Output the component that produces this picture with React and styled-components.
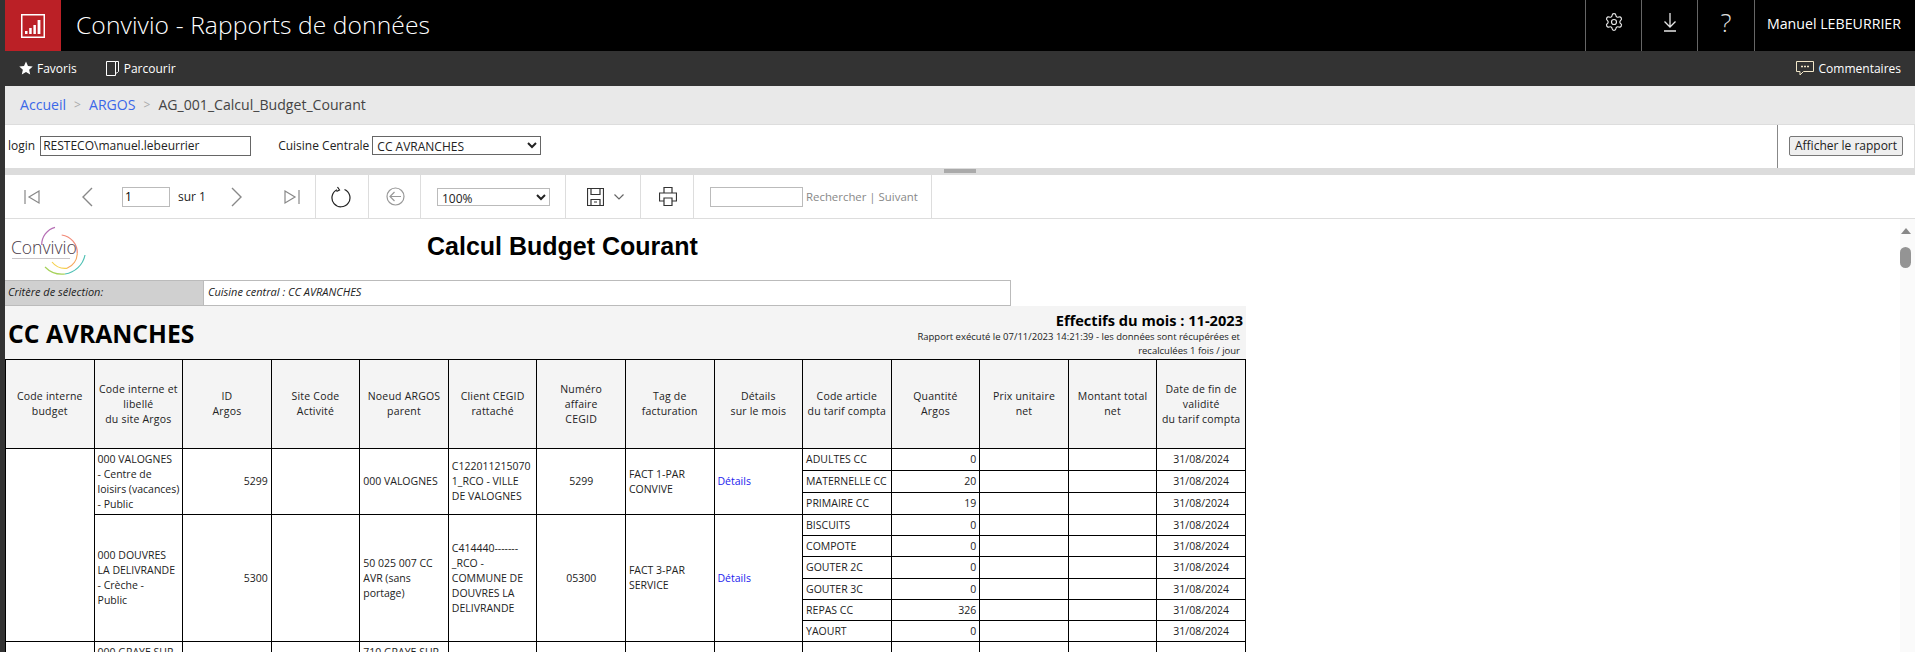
import React from 'react';
import styled, { createGlobalStyle } from 'styled-components';
import { Settings } from 'lucide-react';

const GlobalStyle = createGlobalStyle`
  html, body {
    margin: 0;
    height: 100%;
    overflow: hidden;
    background: #333;
    font-family: 'Open Sans', 'Liberation Sans', sans-serif;
  }
  #root { height: 100%; }
  * { box-sizing: border-box; }
`;

const Page = styled.div`
  height: 652px;
  padding-left: 5px;
  display: flex;
  flex-direction: column;
  overflow: hidden;
`;

// top black bar
const Header = styled.header`
  height: 51px;
  flex: none;
  background: #000;
  color: #fff;
  display: flex;
  align-items: stretch;
`;

const AppTile = styled.div`
  width: 56px;
  background: #bb2026;
  display: flex;
  align-items: center;
  justify-content: center;
`;

const AppTitle = styled.h1`
  margin: 0 auto 0 15px;
  font-size: 24.6px;
  font-weight: 300;
  line-height: 49px;
  letter-spacing: 0.1px;
  white-space: nowrap;
`;

const HeaderBtn = styled.div`
  width: ${(p) => p.$w || 56}px;
  border-left: 1px solid #666;
  display: flex;
  align-items: center;
  justify-content: center;
  padding-bottom: 7px;
  font-size: 26px;
  font-weight: 300;
  color: #ddd;
`;

const UserName = styled.div`
  width: 161px;
  border-left: 1px solid #666;
  padding: 0 14px 4px 0;
  font-size: 14.2px;
  display: flex;
  align-items: center;
  justify-content: flex-end;
  white-space: nowrap;
`;

// dark nav
const NavBar = styled.nav`
  height: 35px;
  flex: none;
  background: #333;
  color: #fff;
  display: flex;
  align-items: center;
  font-size: 12px;
  padding: 0 14px 1px 14px;
`;

const NavItem = styled.span`
  display: flex;
  align-items: center;
  gap: ${(p) => p.$gap || 5}px;
  margin-right: ${(p) => p.$mr || 0}px;
  margin-left: ${(p) => (p.$right ? 'auto' : 0)};
`;

const Breadcrumb = styled.div`
  height: 39px;
  flex: none;
  background: #e9e9e9;
  border-bottom: 1px solid #ddd;
  display: flex;
  align-items: center;
  padding: 0 0 1px 15px;
  font-size: 14.1px;
  color: #444;
`;

const Crumb = styled.a`
  color: #3b68e8;
`;

const CrumbSep = styled.span`
  color: #aaa;
  margin: 0 8px;
  font-size: 12px;
`;

const ParamBar = styled.div`
  height: 43px;
  flex: none;
  background: #fff;
  display: flex;
  align-items: stretch;
  font-size: 12px;
  color: #222;
`;

const ParamFields = styled.div`
  flex: 1;
  display: flex;
  align-items: center;
  padding: 0 0 2px 3px;
`;

const ParamLabel = styled.label`
  margin-left: ${(p) => p.$ml || 0}px;
  margin-right: ${(p) => p.$mr || 3}px;
`;

const LoginInput = styled.input`
  width: 211px;
  height: 20px;
  border: 1px solid #666;
  padding: 0 2px;
  font: 12px 'Open Sans', sans-serif;
  color: #222;
`;

const BoxSelect = styled.select`
  width: ${(p) => p.$w}px;
  height: ${(p) => p.$h}px;
  border: 1px solid ${(p) => p.$line};
  border-radius: 0;
  background: #fff;
  font: 12px 'Open Sans', sans-serif;
  color: #222;
  padding: 0;
`;

const ViewCell = styled.div`
  width: 138px;
  border-left: 1px solid #888;
  border-right: 1px solid #ddd;
  display: flex;
  align-items: center;
  padding: 0 0 2px 11px;
`;

const ViewBtn = styled.button`
  width: 114px;
  height: 20px;
  border: 1px solid #777;
  border-radius: 2px;
  background: #efefef;
  font: 12px 'Open Sans', sans-serif;
  color: #222;
  padding: 0;
  white-space: nowrap;
`;

const Splitter = styled.div`
  height: 7px;
  flex: none;
  background: #dcdcdc;
  padding: 1px 0 0 939px;
`;

const SplitHandle = styled.div`
  width: 32px;
  height: 4px;
  background: #aaa;
`;

// report toolbar
const ToolBar = styled.div`
  height: 44px;
  flex: none;
  background: #fff;
  border-bottom: 1px solid #ddd;
  display: flex;
`;

const ToolGroup = styled.div`
  width: ${(p) => p.$w}px;
  flex: none;
  border-right: 1px solid #ddd;
  display: flex;
  align-items: center;
  padding-left: ${(p) => p.$pl || 0}px;
`;

const ToolIcon = styled.svg`
  flex: none;
  margin-left: ${(p) => p.$ml || 0}px;
  fill: none;
  stroke: ${(p) => p.$c || '#888'};
  stroke-width: 1.2;
`;

const PageInput = styled.input`
  width: 48px;
  height: 20px;
  border: 1px solid #bbb;
  padding: 0 2px;
  margin-left: 29px;
  font: 12px 'Open Sans', sans-serif;
`;

const PageOf = styled.span`
  font-size: 12px;
  color: #222;
  margin-left: 8px;
`;

const SearchInput = styled.input`
  width: 93px;
  height: 20px;
  border: 1px solid #bbb;
  padding: 0;
`;

const SearchText = styled.span`
  font-size: 11.4px;
  color: #888;
  margin-left: 3px;
  white-space: nowrap;
`;

const ReportArea = styled.div`
  flex: 1;
  min-height: 0;
  background: #fff;
  display: flex;
`;

const ReportBody = styled.div`
  flex: 1;
  min-width: 0;
  overflow: hidden;
`;

const Scrollbar = styled.div`
  width: 15px;
  flex: none;
  background: #fafafa;
  padding: 9px 4px 0 0;
  display: flex;
  flex-direction: column;
  align-items: center;
`;

const ScrollArrow = styled.div`
  width: 0;
  height: 0;
  border-left: 5px solid transparent;
  border-right: 5px solid transparent;
  border-bottom: 6px solid #888;
`;

const ScrollThumb = styled.div`
  width: 11px;
  height: 21px;
  margin-top: 13px;
  border-radius: 6px;
  background: #949494;
`;

const TitleRow = styled.div`
  height: 61px;
  display: flex;
  align-items: center;
`;

const ReportTitle = styled.h2`
  margin: 0 0 6px 337px;
  font: bold 25px 'Liberation Sans', Arial, sans-serif;
  color: #000;
  white-space: nowrap;
`;

const Criteria = styled.div`
  height: 26px;
  width: 1006px;
  display: flex;
  font-size: 11px;
  font-style: italic;
  color: #222;
`;

const CriteriaLabel = styled.div`
  width: 199px;
  background: #d0d0d0;
  border-top: 1px solid #bbb;
  border-bottom: 1px solid #bbb;
  border-right: 1px solid #bbb;
  padding-left: 3px;
  line-height: 22px;
`;

const CriteriaValue = styled.div`
  flex: 1;
  border: 1px solid #bbb;
  border-left: none;
  padding-left: 4px;
  line-height: 22px;
`;

const Panel = styled.div`
  width: 1241px;
  background: #f4f4f4;
`;

const PanelHead = styled.div`
  height: 53px;
  display: flex;
  justify-content: space-between;
  padding: 0 3px 0 3px;
`;

const CenterName = styled.div`
  font-size: 24.7px;
  font-weight: 700;
  color: #000;
  line-height: 55px;
  white-space: nowrap;
`;

const PanelInfo = styled.div`
  text-align: right;
  padding-top: 5px;
`;

const MonthLabel = styled.div`
  font-size: 14.6px;
  font-weight: 700;
  color: #000;
  line-height: 19px;
`;

const RunNote = styled.div`
  font-size: 9.5px;
  line-height: 14px;
  color: #222;
  padding-right: 3px;
  white-space: pre;
`;

const Grid = styled.table`
  width: 1241px;
  table-layout: fixed;
  border-collapse: collapse;
  border: 1px solid #000;
  font-size: 10.5px;
  line-height: 15px;
  color: #222;
  background: #fff;
`;

const Head = styled.th`
  height: 89px;
  background: #f4f4f4;
  border: 1px solid #000;
  font-weight: 400;
  text-align: center;
  letter-spacing: 0.2px;
  padding: 0 1px;
  white-space: pre;
`;

const Cell = styled.td`
  border: 1px solid #000;
  padding: ${(p) => (p.$top ? '3px' : '0')} 3px 0;
  height: ${(p) => (p.$h ? p.$h + 'px' : 'auto')};
  text-align: ${(p) => p.$align || 'left'};
  vertical-align: ${(p) => (p.$top ? 'top' : 'middle')};
  white-space: pre;
  overflow: hidden;
`;

const DetailLink = styled.a`
  color: #2222ee;
`;

const headers = [
  'Code interne\nbudget',
  'Code interne et\nlibellé\ndu site Argos',
  'ID\nArgos',
  'Site Code\nActivité',
  'Noeud ARGOS\nparent',
  'Client CEGID\nrattaché',
  'Numéro\naffaire\nCEGID',
  'Tag de\nfacturation',
  'Détails\nsur le mois',
  'Code article\ndu tarif compta',
  'Quantité\nArgos',
  'Prix unitaire\nnet',
  'Montant total\nnet',
  'Date de fin de\nvalidité\ndu tarif compta',
];

const sites = [
  {
    label: '000 VALOGNES\n- Centre de\nloisirs (vacances)\n- Public',
    id: '5299',
    parent: '000 VALOGNES',
    client: 'C122011215070\n1_RCO - VILLE\nDE VALOGNES',
    affaire: '5299',
    tag: 'FACT 1-PAR\nCONVIVE',
    lines: [['ADULTES CC', '0', 22], ['MATERNELLE CC', '20', 22], ['PRIMAIRE CC', '19', 22]],
  },
  {
    label: '000 DOUVRES\nLA DELIVRANDE\n- Crèche -\nPublic',
    id: '5300',
    parent: '50 025 007 CC\nAVR (sans\nportage)',
    client: 'C414440-------\n_RCO -\nCOMMUNE DE\nDOUVRES LA\nDELIVRANDE',
    affaire: '05300',
    tag: 'FACT 3-PAR\nSERVICE',
    lines: [['BISCUITS', '0', 21], ['COMPOTE', '0', 21], ['GOUTER 2C', '0', 22], ['GOUTER 3C', '0', 21], ['REPAS CC', '326', 21], ['YAOURT', '0', 21]],
  },
];

const Logo = () => (
  <svg width="85" height="52" viewBox="0 0 85 52" fill="none" strokeWidth="1.2">
    <path d="M36.700 21A18 18 0 0 1 50 3.300" stroke="#b66fb5" />
    <path d="M56.700 11A18 18 0 0 1 72.300 29.300" stroke="#f28a78" />
    <path d="M72.300 29.300A17 17 0 0 1 62 44.300" stroke="#f6a860" />
    <path d="M62 44.300A17 17 0 0 1 47 38" stroke="#f5d04c" />
    <path d="M80 31A24 24 0 0 1 60 50" stroke="#4fc0b4" />
    <path d="M60 50A24 24 0 0 1 40 43" stroke="#a6d25a" />
    <text x="6" y="30" fontFamily="'Open Sans', sans-serif" fontSize="17.500" fontWeight="300" fill="#4a3b48">Convivio</text>
    <path d="M7 34.500h58" stroke="#c9c5c8" />
  </svg>
);

export default function App() {
  return (
    <Page>
      <GlobalStyle />
      <Header>
        <AppTile>
          <svg width="24" height="24" viewBox="0 0 24 24" fill="none">
            <rect x="0.75" y="0.75" width="22.5" height="22.5" stroke="#fff" strokeWidth="1.5" />
            <path d="M4 20v-3h2.500v3zM8.200 20v-6h2.500v6zM12.400 20v-9h2.500v9zM16.600 20V6h2.800v14z" fill="#fff" />
          </svg>
        </AppTile>
        <AppTitle>Convivio - Rapports de données</AppTitle>
        <HeaderBtn>
          <Settings size={20} strokeWidth={1.4} color="#e6e6e6" />
        </HeaderBtn>
        <HeaderBtn>
          <svg width="14" height="20" viewBox="0 0 14 20" fill="none" stroke="#e6e6e6" strokeWidth="1.3">
            <path d="M7 1v14M1.500 9.500 7 15l5.500-5.500M1 19h12" />
          </svg>
        </HeaderBtn>
        <HeaderBtn $w={57}>?</HeaderBtn>
        <UserName>Manuel LEBEURRIER</UserName>
      </Header>

      <NavBar>
        <NavItem $mr={29} $gap={4}>
          <svg width="14" height="14" viewBox="0 0 24 24" fill="#fff">
            <path d="M12 1l3.400 7.600 8.100.8-6.100 5.500 1.800 8.100L12 18.800 4.800 23l1.800-8.100L.5 9.400l8.100-.8z" />
          </svg>
          Favoris
        </NavItem>
        <NavItem>
          <svg width="13" height="15" viewBox="0 0 13 15" fill="none" stroke="#fff">
            <path d="M.5.500h9v14h-9zM9.500.5h3v10l-1 1-2 1" />
          </svg>
          Parcourir
        </NavItem>
        <NavItem $right $gap={5}>
          <svg width="18" height="15" viewBox="0 0 18 15" fill="none" stroke="#f1e6c8">
            <path d="M.5.500h17v10H7.500L4 14v-3.500H.5z" />
            <path d="M5 5.500h2M8 5.500h2M11 5.500h2" strokeWidth="1.600" />
          </svg>
          Commentaires
        </NavItem>
      </NavBar>

      <Breadcrumb>
        <Crumb>Accueil</Crumb>
        <CrumbSep>&gt;</CrumbSep>
        <Crumb>ARGOS</Crumb>
        <CrumbSep>&gt;</CrumbSep>
        <span>AG_001_Calcul_Budget_Courant</span>
      </Breadcrumb>

      <ParamBar>
        <ParamFields>
          <ParamLabel $mr={5}>login</ParamLabel>
          <LoginInput readOnly value="RESTECO\manuel.lebeurrier" />
          <ParamLabel $ml={27}>Cuisine Centrale</ParamLabel>
          <BoxSelect $w={169} $h={19} $line="#666" defaultValue="CC AVRANCHES">
            <option>CC AVRANCHES</option>
          </BoxSelect>
        </ParamFields>
        <ViewCell>
          <ViewBtn>Afficher le rapport</ViewBtn>
        </ViewCell>
      </ParamBar>

      <Splitter>
        <SplitHandle />
      </Splitter>

      <ToolBar>
        <ToolGroup $w={311} $pl={19}>
          <ToolIcon width="16" height="16" viewBox="0 0 16 16">
            <path d="M1 1v14M15 2 5 8l10 6z" />
          </ToolIcon>
          <ToolIcon $ml={41} width="12" height="20" viewBox="0 0 12 20" style={{ strokeWidth: 1.4 }}>
            <path d="M11 1 2 10l9 9" />
          </ToolIcon>
          <PageInput readOnly value="1" />
          <PageOf>sur 1</PageOf>
          <ToolIcon $ml={25} width="12" height="20" viewBox="0 0 12 20" style={{ strokeWidth: 1.4 }}>
            <path d="m1 1 9 9-9 9" />
          </ToolIcon>
          <ToolIcon $ml={41} width="16" height="16" viewBox="0 0 16 16">
            <path d="M15 1v14M1 2l10 6-10 6z" />
          </ToolIcon>
        </ToolGroup>
        <ToolGroup $w={53} $pl={15}>
          <ToolIcon width="20" height="22" viewBox="0 0 20 22" $c="#222">
            <path d="M13.500 3.500A9 9 0 1 1 6 3.700M6.500 1l2 3-3 1.500" />
          </ToolIcon>
        </ToolGroup>
        <ToolGroup $w={52} $pl={17}>
          <ToolIcon width="19" height="19" viewBox="0 0 19 19" $c="#999">
            <circle cx="9.500" cy="9.500" r="8.500" />
            <path d="M15 9.500H4M8.500 5l-4.500 4.500L8.500 14" />
          </ToolIcon>
        </ToolGroup>
        <ToolGroup $w={145} $pl={16}>
          <BoxSelect $w={113} $h={18} $line="#bbb" defaultValue="100%">
            <option>100%</option>
          </BoxSelect>
        </ToolGroup>
        <ToolGroup $w={75} $pl={21}>
          <ToolIcon width="17" height="18" viewBox="0 0 17 18" $c="#333">
            <path d="M.5.500h16v17H.5zM4 .5v6h9v-6M4 17.500v-6h9v6M7 14h3" />
          </ToolIcon>
          <ToolIcon $ml={10} width="10" height="6" viewBox="0 0 10 6" $c="#666">
            <path d="m.5.500 4.500 4.500L9.500.5" />
          </ToolIcon>
        </ToolGroup>
        <ToolGroup $w={53} $pl={18}>
          <ToolIcon width="18" height="19" viewBox="0 0 18 19" $c="#333">
            <path d="M5 6V.5h8V6M5 14H.5V6h17v8H13M5 11h8v7.500H5z" />
          </ToolIcon>
        </ToolGroup>
        <ToolGroup $w={238} $pl={16}>
          <SearchInput readOnly />
          <SearchText>Rechercher | Suivant</SearchText>
        </ToolGroup>
      </ToolBar>

      <ReportArea>
        <ReportBody>
          <TitleRow>
            <Logo />
            <ReportTitle>Calcul Budget Courant</ReportTitle>
          </TitleRow>
          <Criteria>
            <CriteriaLabel>Critère de sélection:</CriteriaLabel>
            <CriteriaValue>Cuisine central : CC AVRANCHES</CriteriaValue>
          </Criteria>
          <Panel>
            <PanelHead>
              <CenterName>CC AVRANCHES</CenterName>
              <PanelInfo>
                <MonthLabel>Effectifs du mois : 11-2023</MonthLabel>
                <RunNote>
                  {'Rapport exécuté le 07/11/2023 14:21:39 - les données sont récupérées et\nrecalculées 1 fois / jour'}
                </RunNote>
              </PanelInfo>
            </PanelHead>
            <Grid>
              <thead>
                <tr>
                  {headers.map((h) => (
                    <Head key={h}>{h}</Head>
                  ))}
                </tr>
              </thead>
              <tbody>
                {sites.map((s, si) =>
                  s.lines.map((line, i) => (
                    <tr key={line[0]}>
                      {i === 0 && si === 0 && <Cell rowSpan={9} />}
                      {i === 0 && (
                        <>
                          <Cell rowSpan={s.lines.length}>{s.label}</Cell>
                          <Cell rowSpan={s.lines.length} $align="right">{s.id}</Cell>
                          <Cell rowSpan={s.lines.length} />
                          <Cell rowSpan={s.lines.length}>{s.parent}</Cell>
                          <Cell rowSpan={s.lines.length}>{s.client}</Cell>
                          <Cell rowSpan={s.lines.length} $align="center">{s.affaire}</Cell>
                          <Cell rowSpan={s.lines.length}>{s.tag}</Cell>
                          <Cell rowSpan={s.lines.length}>
                            <DetailLink>Détails</DetailLink>
                          </Cell>
                        </>
                      )}
                      <Cell $h={line[2]}>{line[0]}</Cell>
                      <Cell $align="right">{line[1]}</Cell>
                      <Cell />
                      <Cell />
                      <Cell $align="center">31/08/2024</Cell>
                    </tr>
                  ))
                )}
                <tr>
                  <Cell />
                  <Cell $top>000 GRAYE SUR</Cell>
                  <Cell />
                  <Cell />
                  <Cell $top>710 GRAYE SUR</Cell>
                  <Cell />
                  <Cell />
                  <Cell />
                  <Cell />
                  <Cell $h={22} />
                  <Cell />
                  <Cell />
                  <Cell />
                  <Cell />
                </tr>
              </tbody>
            </Grid>
          </Panel>
        </ReportBody>
        <Scrollbar>
          <ScrollArrow />
          <ScrollThumb />
        </Scrollbar>
      </ReportArea>
    </Page>
  );
}
